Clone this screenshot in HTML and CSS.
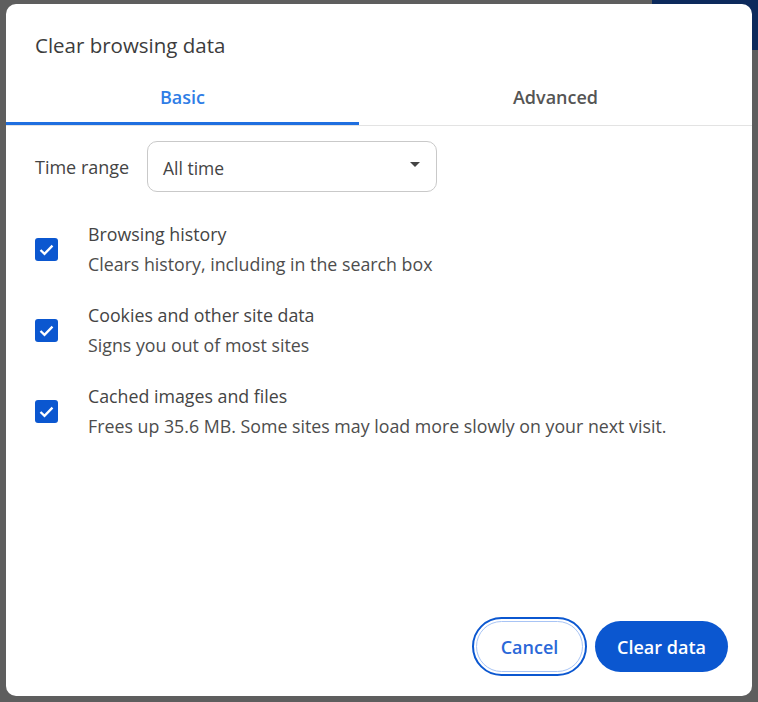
FILE: index.html
```html
<!DOCTYPE html>
<html>
<head>
<meta charset="utf-8">
<link rel="stylesheet" href="styles.css">
</head>
<body>
<div class="behind">
  <div class="behind-button"></div>
</div>
<div class="dialog">
  <h1 class="title">Clear browsing data</h1>
  <div class="tabs">
    <div class="tab active">Basic</div>
    <div class="tab">Advanced</div>
  </div>
  <div class="body">
    <div class="range">
      <span class="range-label">Time range</span>
      <div class="select">
        <span>All time</span>
        <span class="caret"></span>
      </div>
    </div>
    <div class="option">
      <span class="check"><svg viewBox="0 0 23 23" width="23" height="23"><path d="M5.5 12l4 3.9 8-8.3" fill="none" stroke="#fff" stroke-width="2.3"/></svg></span>
      <div class="texts">
        <div class="opt-title">Browsing history</div>
        <div class="opt-desc">Clears history, including in the search box</div>
      </div>
    </div>
    <div class="option">
      <span class="check"><svg viewBox="0 0 23 23" width="23" height="23"><path d="M5.5 12l4 3.9 8-8.3" fill="none" stroke="#fff" stroke-width="2.3"/></svg></span>
      <div class="texts">
        <div class="opt-title">Cookies and other site data</div>
        <div class="opt-desc">Signs you out of most sites</div>
      </div>
    </div>
    <div class="option">
      <span class="check"><svg viewBox="0 0 23 23" width="23" height="23"><path d="M5.5 12l4 3.9 8-8.3" fill="none" stroke="#fff" stroke-width="2.3"/></svg></span>
      <div class="texts">
        <div class="opt-title">Cached images and files</div>
        <div class="opt-desc">Frees up 35.6 MB. Some sites may load more slowly on your next visit.</div>
      </div>
    </div>
  </div>
  <div class="actions">
    <button class="btn cancel">Cancel</button>
    <button class="btn primary">Clear data</button>
  </div>
</div>
</body>
</html>
```

FILE: styles.css
```css
html, body {
  margin: 0;
  padding: 0;
}
body {
  width: 758px;
  height: 702px;
  background: #5e5e5e;
  font-family: "Open Sans", "Noto Sans", sans-serif;
  position: relative;
  overflow: hidden;
  padding: 4px 0 0 6px;
  box-sizing: border-box;
}
.behind {
  position: absolute;
  inset: 0;
}
.behind-button {
  position: absolute;
  left: 652px;
  top: -10px;
  width: 130px;
  height: 60px;
  border-radius: 10px;
  background: #0d2a5c;
}
.dialog {
  position: relative;
  width: 746px;
  height: 692px;
  background: #fff;
  border-radius: 10px;
  display: flex;
  flex-direction: column;
  box-sizing: border-box;
}
.title {
  margin: 0;
  padding: 29px 0 0 29px;
  font-size: 20.5px;
  font-weight: 400;
  line-height: 24px;
  color: #3c3c3c;
}
.tabs {
  display: flex;
  margin-top: 17px;
  border-bottom: 1px solid #e3e3e3;
}
.tab {
  flex: 1 1 0;
  text-align: center;
  font-size: 18px;
  font-weight: 600;
  color: #555;
  height: 51px;
  line-height: 46px;
  box-sizing: border-box;
}
.tab.active {
  flex: 0 0 353px;
  color: #2f7de6;
  border-bottom: 3px solid #1f6fe0;
}
.body {
  padding: 15px 29px 0 29px;
  flex: 1;
}
.range {
  display: flex;
  align-items: center;
}
.range-label {
  font-size: 18px;
  color: #444;
  width: 112px;
}
.select {
  width: 290px;
  height: 51px;
  box-sizing: border-box;
  border: 1px solid #c9c9c9;
  border-radius: 10px;
  display: flex;
  align-items: center;
  justify-content: space-between;
  padding: 2px 16px 0 15px;
  font-size: 17.5px;
  color: #444;
}
.caret {
  width: 0;
  height: 0;
  border-left: 5px solid transparent;
  border-right: 5px solid transparent;
  border-top: 5px solid #444;
  margin-bottom: 6px;
}
.option {
  display: flex;
  align-items: center;
  margin-top: 27px;
}
.option + .option {
  margin-top: 21px;
}
.check {
  width: 23px;
  height: 23px;
  background: #0b57d0;
  border-radius: 3px;
  margin-right: 30px;
  display: flex;
}
.texts {
  font-size: 17.8px;
  line-height: 30px;
  color: #4d4d4d;
}
.opt-title {
  color: #444;
}
.actions {
  display: flex;
  justify-content: flex-end;
  gap: 12px;
  padding: 0 24px 24px 0;
}
.btn {
  height: 51px;
  border-radius: 26px;
  font-family: inherit;
  font-size: 18px;
  font-weight: 600;
  cursor: pointer;
}
.cancel {
  width: 107px;
  background: #fff;
  color: #2a68d8;
  border: 1px solid #a8c4f5;
  outline: 2px solid #0b57d0;
  outline-offset: 2px;
}
.primary {
  width: 133px;
  background: #0b57d0;
  color: #fff;
  border: none;
}
```
